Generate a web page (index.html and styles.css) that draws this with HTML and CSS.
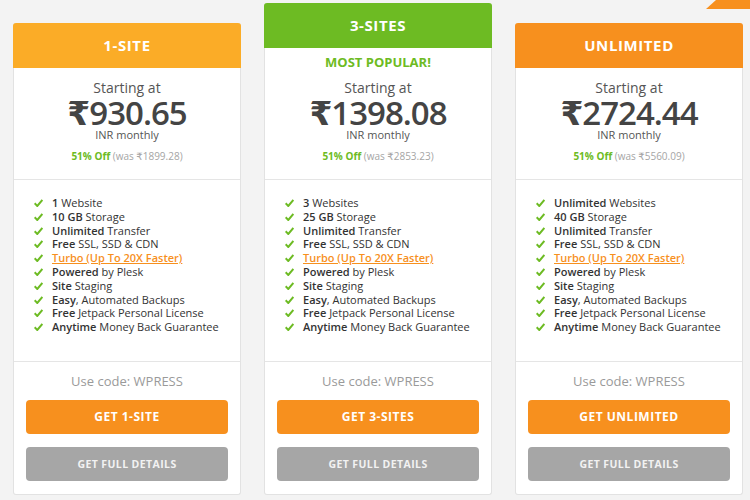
FILE: index.html
```html
<!DOCTYPE html>
<html lang="en">
<head>
    <meta charset="UTF-8">
    <meta name="viewport" content="width=device-width, initial-scale=1.0">
    <title>WordPress Hosting Plans</title>
    <link rel="stylesheet" href="styles.css">
</head>
<body>
    <!-- pojok oranye kanan atas -->
    <div class="corner"></div>

    <div class="plans">
        <!-- 1-SITE -->
        <div class="card">
            <div class="card-head head-yellow">1-SITE</div>
            <div class="price-box">
                <p class="start">Starting at</p>
                <p class="price">₹930.65</p>
                <p class="period">INR monthly</p>
                <p class="save"><b>51% Off</b> (was ₹1899.28)</p>
            </div>
            <ul class="features">
                <li><b>1</b> Website</li>
                <li><b>10 GB</b> Storage</li>
                <li><b>Unlimited</b> Transfer</li>
                <li><b>Free</b> SSL, SSD &amp; CDN</li>
                <li><a href="#" class="turbo">Turbo (Up To 20X Faster)</a></li>
                <li><b>Powered</b> by Plesk</li>
                <li><b>Site</b> Staging</li>
                <li><b>Easy</b>, Automated Backups</li>
                <li><b>Free</b> Jetpack Personal License</li>
                <li><b>Anytime</b> Money Back Guarantee</li>
            </ul>
            <div class="card-foot">
                <p class="code">Use code: WPRESS</p>
                <a href="#" class="btn btn-buy">GET 1-SITE</a>
                <a href="#" class="btn btn-details">GET FULL DETAILS</a>
            </div>
        </div>

        <!-- 3-SITES -->
        <div class="card card-popular">
            <div class="card-head head-green">3-SITES</div>
            <div class="popular">MOST POPULAR!</div>
            <div class="price-box">
                <p class="start">Starting at</p>
                <p class="price">₹1398.08</p>
                <p class="period">INR monthly</p>
                <p class="save"><b>51% Off</b> (was ₹2853.23)</p>
            </div>
            <ul class="features">
                <li><b>3</b> Websites</li>
                <li><b>25 GB</b> Storage</li>
                <li><b>Unlimited</b> Transfer</li>
                <li><b>Free</b> SSL, SSD &amp; CDN</li>
                <li><a href="#" class="turbo">Turbo (Up To 20X Faster)</a></li>
                <li><b>Powered</b> by Plesk</li>
                <li><b>Site</b> Staging</li>
                <li><b>Easy</b>, Automated Backups</li>
                <li><b>Free</b> Jetpack Personal License</li>
                <li><b>Anytime</b> Money Back Guarantee</li>
            </ul>
            <div class="card-foot">
                <p class="code">Use code: WPRESS</p>
                <a href="#" class="btn btn-buy">GET 3-SITES</a>
                <a href="#" class="btn btn-details">GET FULL DETAILS</a>
            </div>
        </div>

        <!-- UNLIMITED -->
        <div class="card">
            <div class="card-head head-orange">UNLIMITED</div>
            <div class="price-box">
                <p class="start">Starting at</p>
                <p class="price">₹2724.44</p>
                <p class="period">INR monthly</p>
                <p class="save"><b>51% Off</b> (was ₹5560.09)</p>
            </div>
            <ul class="features">
                <li><b>Unlimited</b> Websites</li>
                <li><b>40 GB</b> Storage</li>
                <li><b>Unlimited</b> Transfer</li>
                <li><b>Free</b> SSL, SSD &amp; CDN</li>
                <li><a href="#" class="turbo">Turbo (Up To 20X Faster)</a></li>
                <li><b>Powered</b> by Plesk</li>
                <li><b>Site</b> Staging</li>
                <li><b>Easy</b>, Automated Backups</li>
                <li><b>Free</b> Jetpack Personal License</li>
                <li><b>Anytime</b> Money Back Guarantee</li>
            </ul>
            <div class="card-foot">
                <p class="code">Use code: WPRESS</p>
                <a href="#" class="btn btn-buy">GET UNLIMITED</a>
                <a href="#" class="btn btn-details">GET FULL DETAILS</a>
            </div>
        </div>
    </div>
</body>
</html>
```

FILE: styles.css
```css
body {
    font-family: 'Open Sans', 'DejaVu Sans', sans-serif;
    background-color: #f3f3f3;
    color: #333;
    margin: 0;
    width: 750px;
    height: 500px;
    overflow: hidden;
    position: relative;
}
p {
    margin: 0;
}
.corner {
    position: absolute;
    top: 0;
    right: 0;
    width: 44px;
    height: 9px;
    background-color: #f7901e;
    clip-path: polygon(10px 0, 100% 0, 100% 100%, 0 100%);
}
.plans {
    display: flex;
    align-items: flex-end;
    gap: 23px;
    padding: 3px 0 0 13px;
}
.card {
    width: 228px;
    box-sizing: border-box;
    height: 472px;
    background-color: #fff;
    border: 1px solid #e2e2e2;
    border-top: none;
    border-radius: 3px;
    display: flex;
    flex-direction: column;
}
.card-popular {
    height: 492px;
}
.card-head {
    height: 45px;
    line-height: 45px;
    margin: 0 -1px;
    border-radius: 3px 3px 0 0;
    color: #fff;
    font-size: 15px;
    font-weight: 700;
    letter-spacing: 0.6px;
    text-align: center;
}
.head-yellow {
    background-color: #fbac27;
}
.head-green {
    background-color: #6dbb23;
}
.head-orange {
    background-color: #f7901e;
}
.popular {
    height: 20px;
    line-height: 28px;
    color: #6dbb23;
    font-size: 13px;
    font-weight: 700;
    text-align: center;
}
.price-box {
    height: 112px;
    box-sizing: border-box;
    padding-top: 11px;
    text-align: center;
    border-bottom: 1px solid #e5e5e5;
}
.start {
    font-size: 14px;
    line-height: 18px;
    color: #555;
}
.price {
    font-size: 33px;
    font-weight: 600;
    line-height: 32px;
    color: #444;
    letter-spacing: -1px;
}
.period {
    font-size: 11px;
    line-height: 12px;
    color: #555;
}
.save {
    margin-top: 8px;
    font-size: 10px;
    line-height: 14px;
    color: #a5a5a5;
}
.save b {
    color: #6dbb23;
}
.features {
    list-style: none;
    margin: 0;
    height: 182px;
    box-sizing: border-box;
    padding: 16px 0 0 20px;
    border-bottom: 1px solid #e5e5e5;
}
.features li {
    font-size: 11px;
    line-height: 13.8px;
    color: #333;
    white-space: nowrap;
}
.features li::before {
    content: '';
    display: inline-block;
    width: 9px;
    height: 8px;
    margin-right: 9px;
    background-image: url("data:image/svg+xml,%3Csvg xmlns='http://www.w3.org/2000/svg' viewBox='0 0 9 8'%3E%3Cpath d='M0.6 4.3 L3.3 7 L8.4 1' fill='none' stroke='%236dbb23' stroke-width='2'/%3E%3C/svg%3E");
    background-size: cover;
}
.features b {
    font-weight: 600;
}
.turbo {
    color: #f7901e;
    font-weight: 600;
    text-decoration: underline;
}
.card-foot {
    flex: 1;
    padding: 10px 12px 0;
    display: flex;
    flex-direction: column;
}
.code {
    font-size: 13px;
    line-height: 18px;
    color: #9a9a9a;
    text-align: center;
    margin-bottom: 10px;
}
.btn {
    display: block;
    height: 34px;
    line-height: 34px;
    border-radius: 4px;
    color: #fff;
    font-weight: 700;
    text-align: center;
    text-decoration: none;
}
.btn-buy {
    background-color: #f7901e;
    font-size: 12px;
    letter-spacing: 0.5px;
    margin-bottom: 13px;
}
.btn-details {
    background-color: #a6a6a6;
    color: #f2f2f2;
    font-size: 10.5px;
    letter-spacing: 0.4px;
}
```
